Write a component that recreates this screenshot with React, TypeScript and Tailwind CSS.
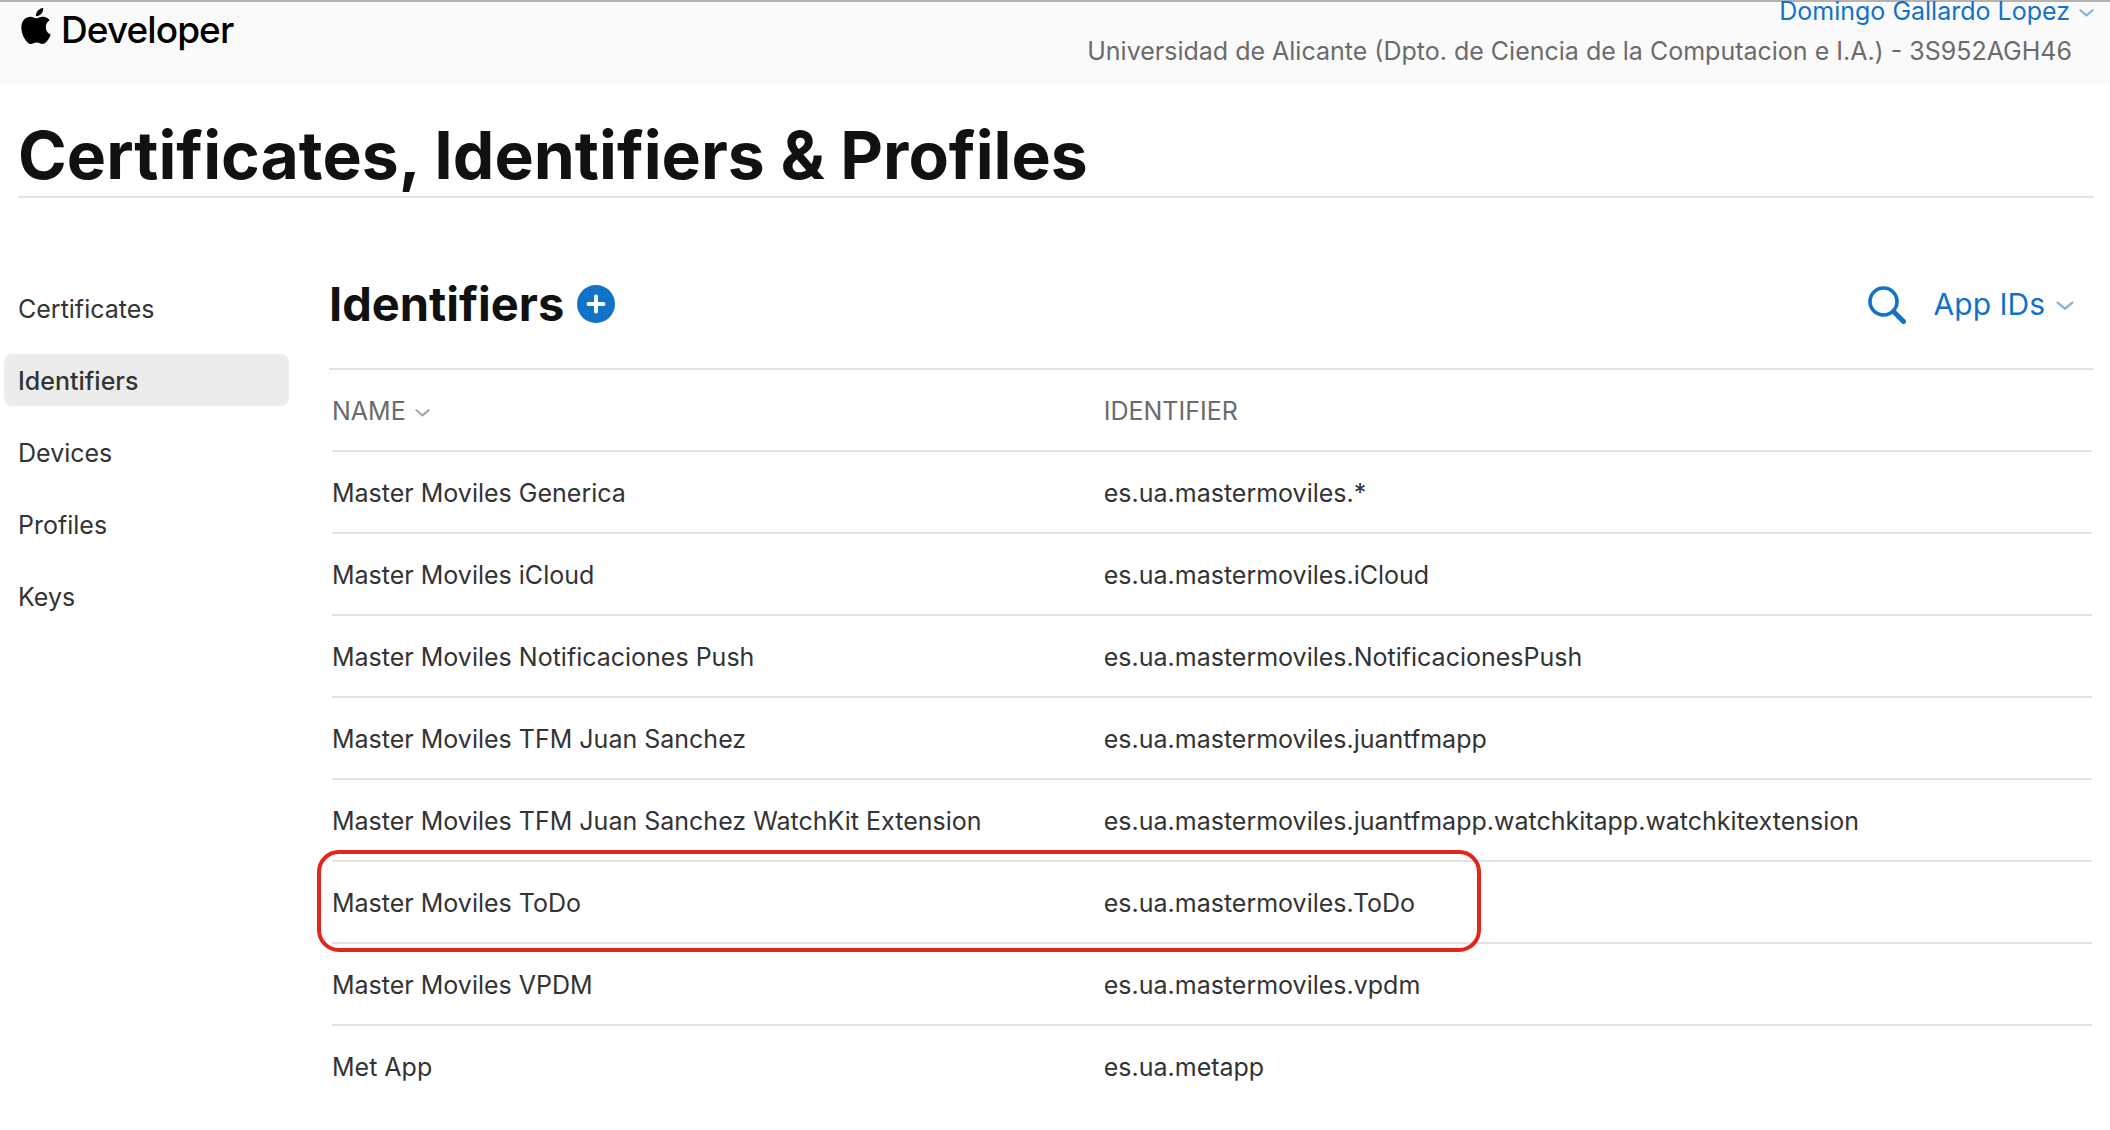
import React from "react";

const navItems = ["Certificates", "Identifiers", "Devices", "Profiles", "Keys"];

const rows = [
  { name: "Master Moviles Generica", identifier: "es.ua.mastermoviles.*" },
  { name: "Master Moviles iCloud", identifier: "es.ua.mastermoviles.iCloud" },
  { name: "Master Moviles Notificaciones Push", identifier: "es.ua.mastermoviles.NotificacionesPush" },
  { name: "Master Moviles TFM Juan Sanchez", identifier: "es.ua.mastermoviles.juantfmapp" },
  {
    name: "Master Moviles TFM Juan Sanchez WatchKit Extension",
    identifier: "es.ua.mastermoviles.juantfmapp.watchkitapp.watchkitextension",
  },
  { name: "Master Moviles ToDo", identifier: "es.ua.mastermoviles.ToDo", highlighted: true },
  { name: "Master Moviles VPDM", identifier: "es.ua.mastermoviles.vpdm" },
  { name: "Met App", identifier: "es.ua.metapp" },
];

function Chevron({ className }: { className: string }) {
  return (
    <svg viewBox="0 0 16 10" fill="none" stroke="currentColor" strokeWidth="2.2" aria-hidden="true" className={className}>
      <path d="M1.5 2 8 7.500l6.500-5.500" strokeLinecap="round" strokeLinejoin="round" />
    </svg>
  );
}

function AppleLogo() {
  return (
    <svg viewBox="0 0 814 1000" fill="currentColor" aria-hidden="true" className="h-9 w-8">
      <path d="M788.1 340.900c-5.800 4.500-108.200 62.200-108.200 190.500 0 148.400 130.300 200.900 134.200 202.200-.6 3.200-20.700 71.900-68.700 141.900-42.800 61.600-87.500 123.100-155.500 123.100s-85.500-39.500-164-39.500c-76.500 0-103.700 40.800-165.900 40.800s-105.600-57-155.500-127C46.700 790.700 0 663 0 541.800c0-194.400 126.400-297.500 250.800-297.500 66.100 0 121.200 43.400 162.700 43.400 39.500 0 101.100-46 176.300-46 28.500 0 130.900 2.600 198.300 99.200zm-234-181.500c31.100-36.900 53.100-88.100 53.100-139.300 0-7.100-.6-14.300-1.900-20.100-50.600 1.900-110.800 33.700-147.100 75.800-28.500 32.400-55.100 83.600-55.100 135.500 0 7.800 1.300 15.600 1.900 18.100 3.200.6 8.400 1.300 13.600 1.300 45.400 0 102.500-30.400 135.500-71.300z" />
    </svg>
  );
}

export default function App() {
  return (
    <div className="min-h-screen bg-white font-['Inter',sans-serif] text-[25px] leading-10 text-[#333333]">
      <header className="flex items-start justify-between border-t-2 border-[#b3b3b3] bg-[#fafafa] pb-[13px] pl-5">
        <a href="#home" className="flex items-start gap-[9px] pt-[6px] text-black">
          <AppleLogo />
          <span className="text-[37px] leading-[44px] font-medium tracking-tight">Developer</span>
        </a>
        <div className="text-right">
          <button type="button" className="flex w-full items-center justify-end gap-[9px] pr-4 leading-[18px] text-[#1272c8]">
            Domingo Gallardo Lopez
            <Chevron className="mt-1 h-[10px] w-[15px] opacity-50" />
          </button>
          <p className="mt-[11px] pr-[38px] text-[#6b6b6b]">
            Universidad de Alicante (Dpto. de Ciencia de la Computacion e I.A.) - 3S952AGH46
          </p>
        </div>
      </header>

      <div className="pr-4 pl-[18px]">
        <h1 className="border-b-2 border-[#e3e3e3] pt-[33px] pb-[3px] text-[66px] leading-[76px] font-bold text-[#111111]">
          Certificates, Identifiers &amp; Profiles
        </h1>
      </div>

      <div className="flex pr-4 pl-1">
        <nav aria-label="Resources" className="mr-10 flex w-[285px] shrink-0 flex-col gap-5 pt-[84px]">
          {navItems.map((item) =>
            item === "Identifiers" ? (
              <a key={item} href="#identifiers" aria-current="page" className="rounded-lg bg-[#ececec] px-[14px] pt-[7px] pb-[5px] font-medium">
                {item}
              </a>
            ) : (
              <a key={item} href={`#${item.toLowerCase()}`} className="px-[14px] pt-[7px] pb-[5px]">
                {item}
              </a>
            ),
          )}
        </nav>

        <main className="min-w-0 flex-1 pt-[74px]">
          <div className="flex items-center justify-between pr-5 pb-[32px]">
            <div className="flex items-center gap-[13px]">
              <h2 className="text-[47px] leading-[64px] font-bold text-[#111111]">Identifiers</h2>
              <button type="button" aria-label="Add identifier" className="rounded-full bg-[#1272c8] text-white">
                <svg viewBox="0 0 38 38" fill="none" stroke="currentColor" strokeWidth="4" strokeLinecap="round" className="size-[38px]">
                  <path d="M19 11.500v15M11.500 19h15" />
                </svg>
              </button>
            </div>
            <div className="flex items-center gap-7 text-[#1272c8]">
              <button type="button" aria-label="Search" className="pt-[2px]">
                <svg viewBox="0 0 38 38" fill="none" stroke="currentColor" className="size-[38px]">
                  <circle cx="15.500" cy="15.500" r="13.500" strokeWidth="3.600" />
                  <path d="M25.500 25.500 35.500 35.500" strokeWidth="5" strokeLinecap="round" />
                </svg>
              </button>
              <label className="flex items-center gap-[11px]">
                <select aria-label="Identifier type" className="field-sizing-content appearance-none text-[30px] leading-10">
                  <option>App IDs</option>
                </select>
                <Chevron className="mt-1 h-3 w-[18px] opacity-50" />
              </label>
            </div>
          </div>

          <div className="border-t-2 border-[#e3e3e3] pr-[2px] pl-[3px]">
            <table className="w-full table-fixed border-separate border-spacing-0 text-left">
              <thead>
                <tr className="text-[#6b6b6b]">
                  <th scope="col" aria-sort="ascending" className="w-[43.85%] border-b-2 border-[#e3e3e3] pt-[21px] pb-[19px] font-normal">
                    <button type="button" className="flex items-center gap-[9px]">
                      NAME
                      <Chevron className="mt-1 h-[10px] w-[15px] opacity-60" />
                    </button>
                  </th>
                  <th scope="col" className="border-b-2 border-[#e3e3e3] pt-[21px] pb-[19px] font-normal">
                    IDENTIFIER
                  </th>
                </tr>
              </thead>
              <tbody className="[&>tr:last-child>td]:border-b-0">
                {rows.map((row) => (
                  <tr key={row.name} className="relative">
                    <td className="border-b-2 border-[#e3e3e3] pt-[21px] pb-[19px]">
                      {row.name}
                      {row.highlighted && (
                        <span className="pointer-events-none absolute -top-3 right-[611px] -bottom-2 -left-[15px] rounded-[22px] border-4 border-[#e32619]" />
                      )}
                    </td>
                    <td className="border-b-2 border-[#e3e3e3] pt-[21px] pb-[19px]">{row.identifier}</td>
                  </tr>
                ))}
              </tbody>
            </table>
          </div>
        </main>
      </div>
    </div>
  );
}
